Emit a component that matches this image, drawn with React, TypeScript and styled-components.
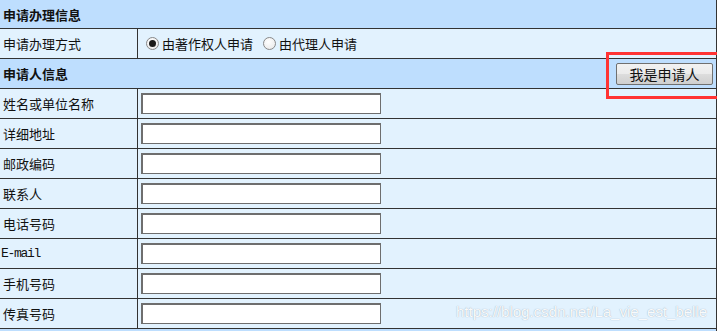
import styled, { createGlobalStyle } from "styled-components";

const GlobalStyle = createGlobalStyle`
  html, body {
    margin: 0;
    padding: 0;
    background: #e3f2fe;
    overflow: hidden;
  }
  body {
    font-family: "Noto Sans CJK SC", "Liberation Sans", sans-serif;
    font-size: 13px;
    color: #111;
  }
`;

const Form = styled.div`
  position: relative;
  width: 717px;
  display: flex;
  flex-direction: column;
`;

const HeaderRow = styled.div<{ $first?: boolean }>`
  height: ${(p) => (p.$first ? "28px" : "29px")};
  display: flex;
  align-items: center;
  justify-content: space-between;
  padding: 0 3px;
  background: #bedefe;
  border-right: 1px solid #333;
  border-bottom: 1px solid #333;
  font-weight: bold;
  flex-shrink: 0;
`;

const Row = styled.div`
  height: 29px;
  display: grid;
  grid-template-columns: 138px 1fr;
  background: #e2f2fe;
  border-right: 1px solid #333;
  border-bottom: 1px solid #333;
  flex-shrink: 0;
`;

const Label = styled.div<{ $mono?: boolean }>`
  display: flex;
  align-items: center;
  padding-left: ${(p) => (p.$mono ? "1px" : "3px")};
  border-right: 1px solid #333;
  font-family: ${(p) =>
    p.$mono ? '"Liberation Mono", monospace' : '"Noto Sans CJK SC", sans-serif'};
  font-size: 13px;
  letter-spacing: ${(p) => (p.$mono ? "-1.3px" : "0")};
`;

const Cell = styled.div`
  display: flex;
  align-items: center;
  padding-left: 3px;
`;

const TextInput = styled.input`
  box-sizing: border-box;
  width: 240px;
  height: 21px;
  margin: 0;
  border: 1px solid #6e6e6e;
  border-width: 2px 1px 1px 2px;
  background: #fff;
  outline: none;
`;

const RadioGroup = styled.label`
  display: inline-flex;
  align-items: center;
  gap: 3px;
  margin-left: 5px;
  margin-right: 5px;
`;

const Radio = styled.input`
  appearance: none;
  box-sizing: border-box;
  width: 13px;
  height: 13px;
  margin: 0;
  border-radius: 50%;
  border: 1px solid #888;
  background: radial-gradient(circle at 40% 35%, #fff 0%, #e6e6e6 100%);
  display: grid;
  place-items: center;

  &:checked::after {
    content: "";
    width: 7px;
    height: 7px;
    border-radius: 50%;
    background: #1a1a1a;
  }
`;

const ApplicantButton = styled.button`
  position: relative;
  box-sizing: border-box;
  width: 97px;
  height: 22px;
  margin: 0;
  padding: 0;
  border: 1px solid #707070;
  border-radius: 2px;
  background: linear-gradient(#f2f2f2, #ebebeb 50%, #dddddd 51%, #cfcfcf);
  font-family: "Noto Sans CJK SC", sans-serif;
  font-size: 14px;
  font-weight: normal;
  color: #111;
`;

const Highlight = styled.span`
  position: absolute;
  left: -11px;
  top: -12px;
  width: 116px;
  height: 47px;
  box-sizing: border-box;
  border: 3px solid #f33;
  pointer-events: none;
`;

const Watermark = styled.div`
  position: absolute;
  right: 10px;
  top: 303px;
  font-family: "Liberation Sans", Arial, sans-serif;
  font-size: 15px;
  color: rgba(255, 255, 255, 0.95);
  text-shadow: 0 0 1px rgba(90, 110, 130, 0.6);
  pointer-events: none;
`;

const fields = [
  "姓名或单位名称",
  "详细地址",
  "邮政编码",
  "联系人",
  "电话号码",
  "E-mail",
  "手机号码",
  "传真号码",
];

export default function App() {
  return (
    <>
      <GlobalStyle />
      <Form>
        <HeaderRow $first>申请办理信息</HeaderRow>
        <Row>
          <Label>申请办理方式</Label>
          <Cell>
            <RadioGroup>
              <Radio type="radio" name="mode" defaultChecked />
              由著作权人申请
            </RadioGroup>
            <RadioGroup>
              <Radio type="radio" name="mode" />
              由代理人申请
            </RadioGroup>
          </Cell>
        </Row>
        <HeaderRow>
          申请人信息
          <ApplicantButton type="button">
            我是申请人
            <Highlight />
          </ApplicantButton>
        </HeaderRow>
        {fields.map((f) => (
          <Row key={f}>
            <Label $mono={f === "E-mail"}>{f}</Label>
            <Cell>
              <TextInput type="text" />
            </Cell>
          </Row>
        ))}
        <HeaderRow />
        <Watermark>https://blog.csdn.net/La_vie_est_belle</Watermark>
      </Form>
    </>
  );
}
